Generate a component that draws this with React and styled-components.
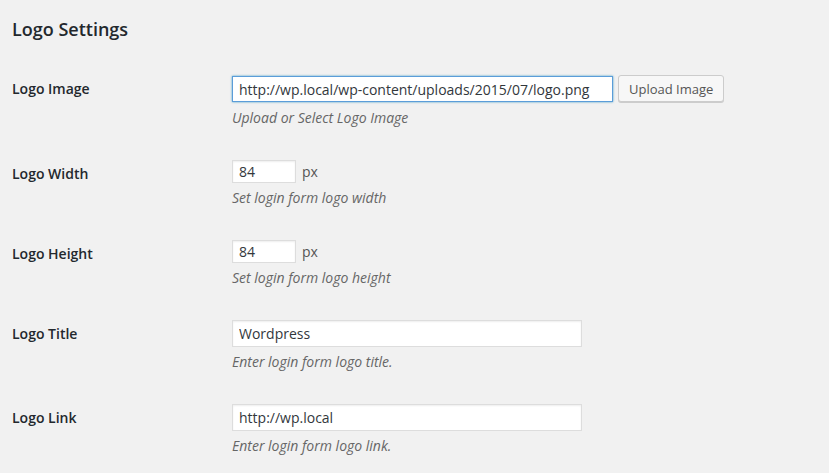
import styled, { createGlobalStyle, css } from "styled-components";

const GlobalStyle = createGlobalStyle`
    html, body{
        margin: 0;
        padding: 0;
        background: #f1f1f1;
    }
    body{
        font-family: "Open Sans", "Noto Sans", sans-serif;
        color: #444444;
        font-size: 13px;
    }
`

const Page = styled.div`
    padding: 18px 12px 0;
    width: 829px;
    height: 473px;
    box-sizing: border-box;
    overflow: hidden;
`
const Heading = styled.h2`
    margin: 0;
    font-size: 18px;
    line-height: 23px;
    font-weight: 600;
    color: #23282d;
`
const Table = styled.div`
    margin-top: 19px;
`
const Row = styled.div`
    display: grid;
    grid-template-columns: 220px 1fr;
`
const Label = styled.label`
    padding-top: 20px;
    font-size: 14px;
    line-height: 18px;
    font-weight: 600;
    color: #23282d;
`
const Field = styled.div`
    padding: 15px 0 17px;
`
const Controls = styled.div`
    display: flex;
    align-items: center;
    gap: 5px;
    height: ${props => props.height || 27}px;
`
const Input = styled.input`
    box-sizing: border-box;
    width: ${props => props.width}px;
    height: ${props => props.height || 27}px;
    margin: 0;
    padding: 0 6px;
    font-family: inherit;
    font-size: 14px;
    color: #32373c;
    background: #ffffff;
    border: 1px solid #dddddd;
    box-shadow: inset 0 1px 2px rgba(0,0,0,.07);
    outline: none;
    ${props => props.focused && css`
        border-color: #5b9dd9;
        box-shadow: 0 0 2px rgba(30,140,190,.8);
    `}
`
const Unit = styled.span`
    margin-left: 1px;
    font-size: 14px;
    color: #555555;
`
const Button = styled.button`
    height: 27px;
    margin-top: -1px;
    padding: 0 10px;
    font-family: inherit;
    font-size: 13px;
    color: #555555;
    background: #f7f7f7;
    border: 1px solid #cccccc;
    border-radius: 3px;
    box-shadow: 0 1px 0 #cccccc;
    cursor: pointer;
`
const Description = styled.p`
    margin: 5px 0 0;
    font-size: 14px;
    line-height: 20px;
    font-style: italic;
    color: #666666;
`

const settings = [
    {label: "Logo Image", value: "http://wp.local/wp-content/uploads/2015/07/logo.png", width: 381, height: 26, line: 28, focused: true, button: "Upload Image", desc: "Upload or Select Logo Image"},
    {label: "Logo Width", value: "84", width: 64, height: 23, line: 23, unit: "px", desc: "Set login form logo width"},
    {label: "Logo Height", value: "84", width: 64, height: 23, line: 23, unit: "px", desc: "Set login form logo height"},
    {label: "Logo Title", value: "Wordpress", width: 350, height: 27, line: 27, desc: "Enter login form logo title."},
    {label: "Logo Link", value: "http://wp.local", width: 350, height: 27, line: 27, desc: "Enter login form logo link."},
]

const App = () => {
    return (
        <>
            <GlobalStyle />
            <Page>
                <Heading>Logo Settings</Heading>
                <Table>
                    {settings.map((item, index) => (
                        <Row key={index + "setting"}>
                            <Label>{item.label}</Label>
                            <Field>
                                <Controls height={item.line}>
                                    <Input type="text" readOnly defaultValue={item.value} width={item.width} height={item.height} focused={item.focused ? 1 : 0} />
                                    {item.unit && <Unit>{item.unit}</Unit>}
                                    {item.button && <Button type="button">{item.button}</Button>}
                                </Controls>
                                <Description>{item.desc}</Description>
                            </Field>
                        </Row>
                    ))}
                </Table>
            </Page>
        </>
    )
}
export default App;
